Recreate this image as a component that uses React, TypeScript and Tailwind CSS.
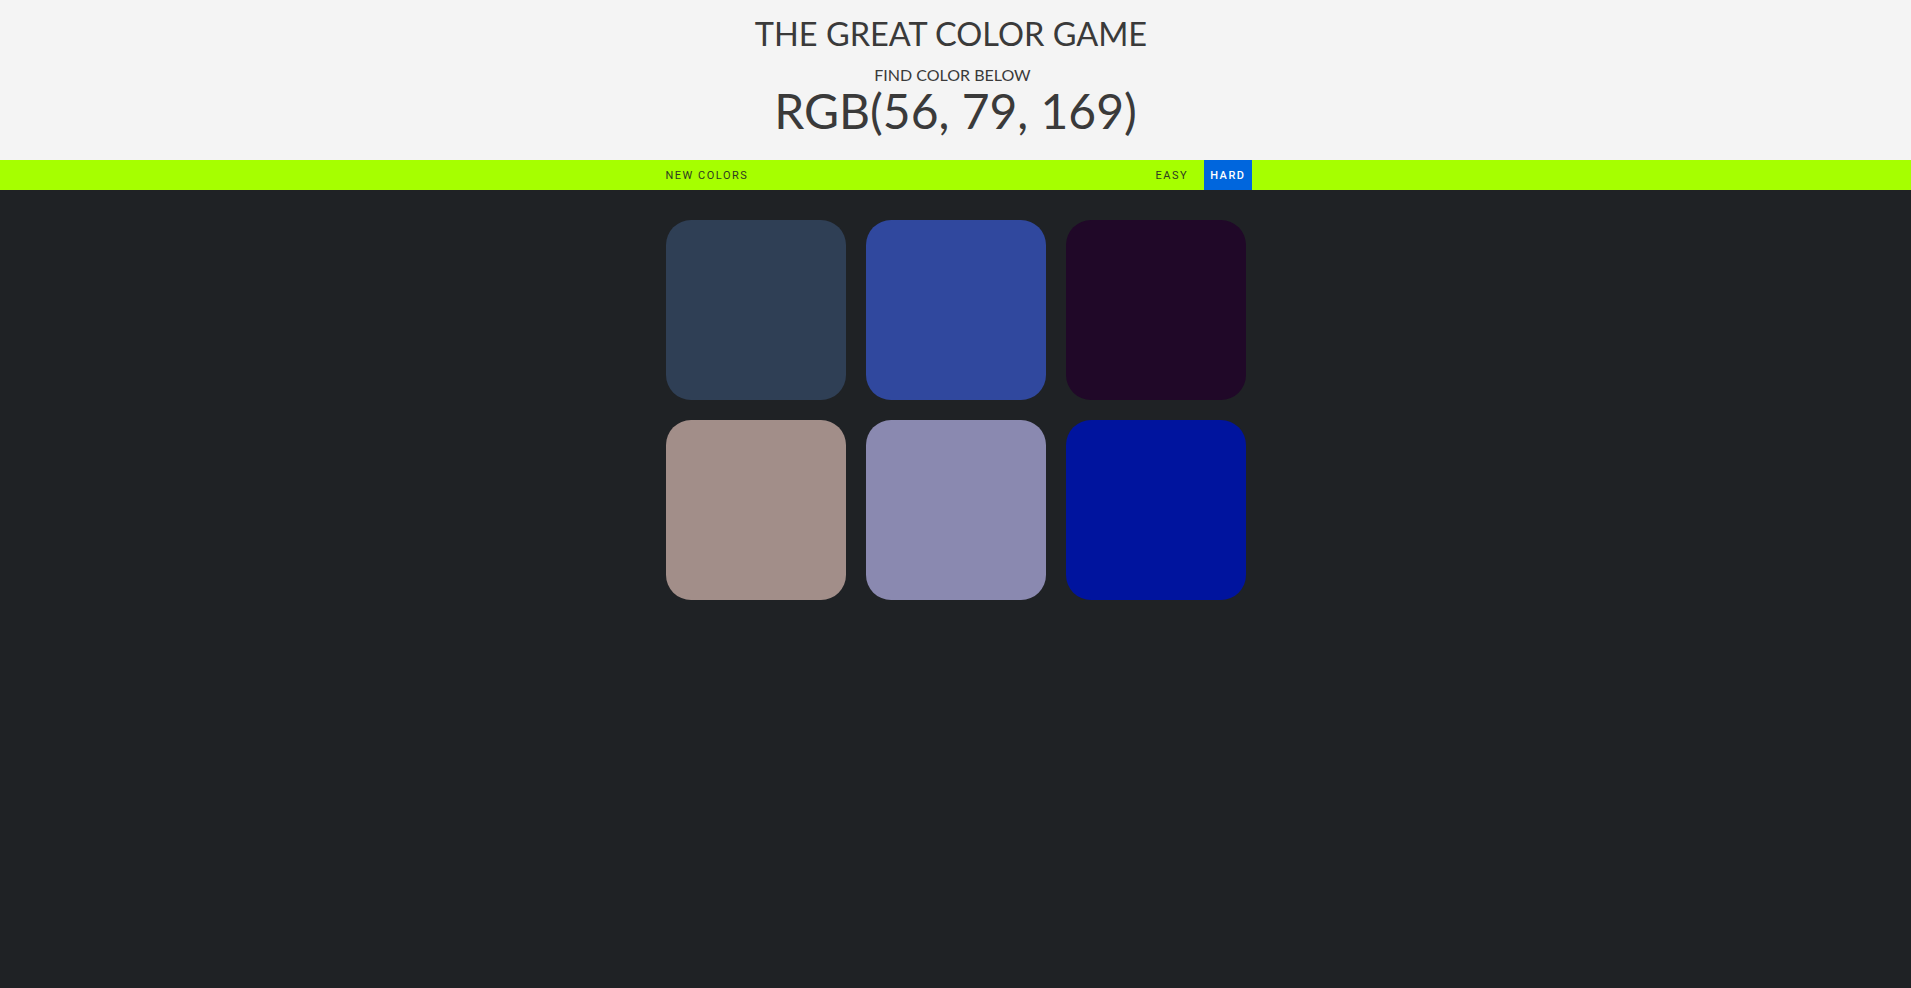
import { useState } from 'react';

const squares = ['#2f3f55', '#30489e', '#200828', '#a28e89', '#8a89b0', '#00149e'];

export default function App() {
  const [mode, setMode] = useState<'easy' | 'hard'>('hard');

  return (
    <div className="min-h-screen bg-[#1f2225] font-['Lato',sans-serif]">
      {/* Header */}
      <header className="bg-[#f4f4f4] text-[#3a3a3a] text-center h-[160px] pt-[14px]">
        <h1 className="pr-[9px] text-[32.5px] leading-[40px] uppercase">The Great Color Game</h1>
        <div className="pr-[6px] mt-[11px] text-[16px] leading-[20px] uppercase">Find color below</div>
        <div className="text-[48px] leading-[52px]">RGB(56, 79, 169)</div>
      </header>

      {/* Controls */}
      <div className="bg-[#a6ff00] h-[30px]">
        <div className="w-[594px] mx-auto h-full flex items-stretch justify-between font-['Roboto',sans-serif] text-[11px] tracking-[1.5px]">
          <button className="px-[7px] pt-[2px] uppercase text-[#2f3a22]">NEW COLORS</button>
          <div className="flex items-stretch gap-[9px]">
            <button
              onClick={() => setMode('easy')}
              className={`px-[7px] pt-[2px] uppercase ${mode === 'easy' ? 'bg-[#0066dd] text-white' : 'text-[#2f3a22]'}`}
            >
              EASY
            </button>
            <button
              onClick={() => setMode('hard')}
              className={`px-[6px] pt-[2px] mr-[1px] font-medium uppercase ${mode === 'hard' ? 'bg-[#0066dd] text-white' : 'text-[#2f3a22]'}`}
            >
              HARD
            </button>
          </div>
        </div>
      </div>

      {/* Squares */}
      <div className="w-[580px] mx-auto pt-[30px] grid grid-cols-3 gap-[20px]">
        {squares.map((c, i) => (
          <div key={i} className="w-[180px] h-[180px] rounded-[25px]" style={{ backgroundColor: c }} />
        ))}
      </div>
    </div>
  );
}
